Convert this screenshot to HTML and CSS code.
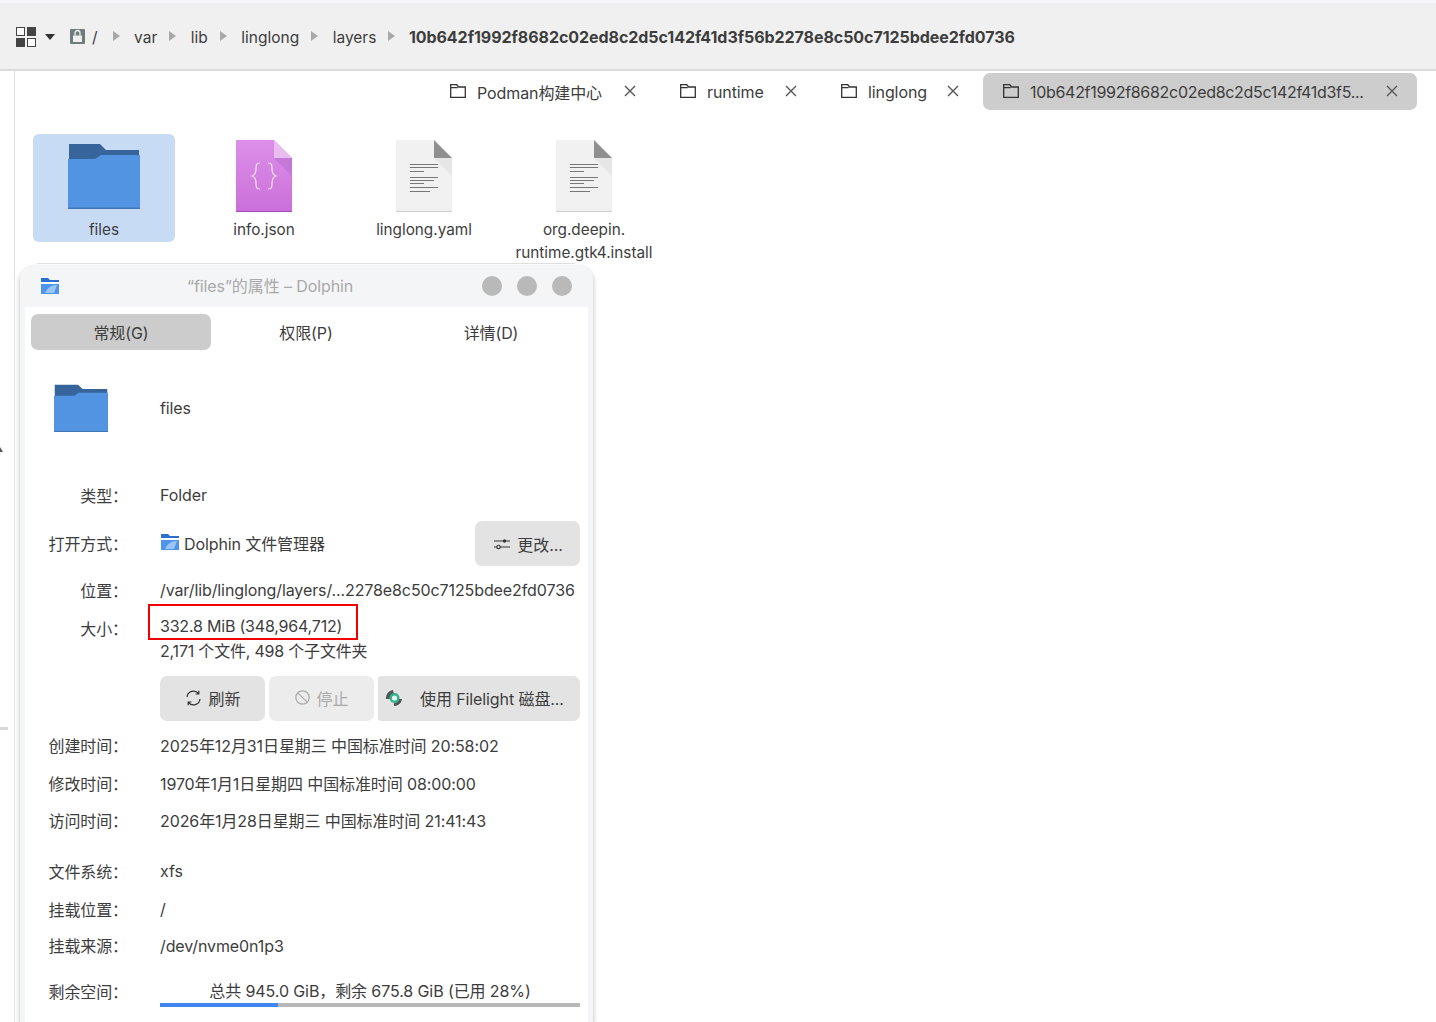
FILE: index.html
```html
<!DOCTYPE html>
<html lang="zh-CN">
<head>
<meta charset="utf-8">
<title>Dolphin</title>
<link rel="stylesheet" href="styles.css">
</head>
<body>
<svg class="defs" width="0" height="0" aria-hidden="true">
  <defs>
    <symbol id="folder" viewBox="0 0 72 66" preserveAspectRatio="none">
      <path d="M1 1h31l6 6h33v16H1z" fill="#37649b"/>
      <path d="M0 16h27l6-4h39v54H0z" fill="#5294e2"/>
      <path d="M0 64.500h72V66H0z" fill="#3f76b8"/>
    </symbol>
    <symbol id="tabfolder" viewBox="0 0 16 14">
      <path d="M.7.7h6l2 2.300h6.600v10.300H.7zM.7 3.600h7" fill="none" stroke="#333" stroke-width="1.300"/>
    </symbol>
    <symbol id="close" viewBox="0 0 12 12">
      <path d="M1 1l10 10M11 1L1 11" fill="none" stroke="#555" stroke-width="1.400"/>
    </symbol>
    <symbol id="arrow" viewBox="0 0 7 10">
      <path d="M0 0l7 5-7 5z" fill="#a9a9a9"/>
    </symbol>
    <symbol id="dolphin" viewBox="0 0 20 16">
      <path d="M1 0h7l2 2h9v13H1z" fill="#2c6fd0"/>
      <path d="M1 4h18v2H1z" fill="#fff"/>
      <path d="M1 6h18v10H1z" fill="#4c95ea"/>
      <path d="M5 15c2-5 6-8 12-8l-3 8z" fill="#9cc4f4"/>
    </symbol>
    <symbol id="doc" viewBox="0 0 56 72">
      <path d="M0 0h38l18 18v54H0z" fill="#f1f1f1"/>
      <path d="M38 18l18 18V18z" fill="#e6e6e6"/>
      <path d="M38 0l18 18H38z" fill="#8f8f8f"/>
      <path d="M0 71h56v1H0z" fill="#cfcfcf"/>
      <path d="M14 24h28v1H14zM14 27h28v1H14zM14 31h14v1H14zM14 37h28v1H14zM14 40h24v1H14zM14 43h14v1H14zM14 47h28v1H14zM14 51h20v1H14z" fill="#777"/>
    </symbol>
  </defs>
</svg>

<header class="toolbar">
  <svg class="grid-icon" width="21" height="21" viewBox="0 0 21 21">
    <rect x=".5" y=".5" width="8" height="8" fill="#fff" stroke="#444"/>
    <rect x="11" y="0" width="9" height="9" fill="#444"/>
    <rect x="0" y="11" width="9" height="9" fill="#444"/>
    <rect x="11.500" y="11.500" width="8" height="8" fill="#fff" stroke="#444"/>
  </svg>
  <svg class="caret" width="10" height="6" viewBox="0 0 10 6"><path d="M0 0h10L5 6z" fill="#333"/></svg>
  <svg class="drive" width="15" height="15" viewBox="0 0 15 15">
    <rect width="15" height="15" rx="1" fill="#6e7d7b"/>
    <path d="M3 6.500h9V13H3z" fill="#f0f0f0"/>
    <path d="M5 6.500V4a2.500 2.500 0 015 0v2.500" fill="none" stroke="#f0f0f0" stroke-width="1.300"/>
  </svg>
  <span class="crumb root">/</span>
  <svg class="sep"><use href="#arrow"/></svg>
  <span class="crumb">var</span>
  <svg class="sep"><use href="#arrow"/></svg>
  <span class="crumb">lib</span>
  <svg class="sep"><use href="#arrow"/></svg>
  <span class="crumb">linglong</span>
  <svg class="sep"><use href="#arrow"/></svg>
  <span class="crumb">layers</span>
  <svg class="sep"><use href="#arrow"/></svg>
  <span class="crumb current">10b642f1992f8682c02ed8c2d5c142f41d3f56b2278e8c50c7125bdee2fd0736</span>
</header>

<main class="view">
  <nav class="tabs">
    <div class="tab t1"><svg class="tab-icon"><use href="#tabfolder"/></svg><span>Podman构建中心</span><svg class="tab-x"><use href="#close"/></svg></div>
    <div class="tab t2"><svg class="tab-icon"><use href="#tabfolder"/></svg><span>runtime</span><svg class="tab-x"><use href="#close"/></svg></div>
    <div class="tab t3"><svg class="tab-icon"><use href="#tabfolder"/></svg><span>linglong</span><svg class="tab-x"><use href="#close"/></svg></div>
    <div class="tab active"><svg class="tab-icon"><use href="#tabfolder"/></svg><span class="tab-long">10b642f1992f8682c02ed8c2d5c142f41d3f5...</span><svg class="tab-x"><use href="#close"/></svg></div>
  </nav>

  <section class="files">
    <div class="file selected">
      <svg class="file-icon folder-big"><use href="#folder"/></svg>
      <span>files</span>
    </div>
    <div class="file">
      <svg class="file-icon" viewBox="0 0 56 72">
        <defs><linearGradient id="pink" x1="0" y1="0" x2="0" y2="1"><stop offset="0" stop-color="#dc8fe8"/><stop offset="1" stop-color="#cb6fda"/></linearGradient></defs>
        <path d="M0 0h38l18 18v54H0z" fill="url(#pink)"/>
        <path d="M38 18l18 18V18z" fill="#c479d6"/>
        <path d="M38 0l18 18H38z" fill="#e9bdf0"/>
        <path d="M0 71h56v1H0z" fill="#a24fb3"/>
        <path d="M24 23c-4 0-4 2-4 6 0 4-1 6-4 7 3 1 4 3 4 7s0 6 4 6M32 23c4 0 4 2 4 6 0 4 1 6 4 7-3 1-4 3-4 7s0 6-4 6" fill="none" stroke="#f6e4f9" stroke-width="1.200"/>
      </svg>
      <span>info.json</span>
    </div>
    <div class="file">
      <svg class="file-icon"><use href="#doc"/></svg>
      <span>linglong.yaml</span>
    </div>
    <div class="file">
      <svg class="file-icon"><use href="#doc"/></svg>
      <span>org.deepin.<br>runtime.gtk4.install</span>
    </div>
  </section>

  <aside class="edge-mark top"></aside>
  <aside class="edge-mark bottom"></aside>

  <section class="dialog">
    <header class="titlebar">
      <svg class="title-icon"><use href="#dolphin"/></svg>
      <span class="title">“files”的属性 – Dolphin</span>
      <div class="win-btns"><i></i><i></i><i></i></div>
    </header>
    <div class="dialog-body">
      <div class="dialog-tabs">
        <div class="dtab on">常规(G)</div>
        <div class="dtab">权限(P)</div>
        <div class="dtab">详情(D)</div>
      </div>

      <div class="rows">
        <div class="row r-icon">
          <div class="label"><svg class="dialog-folder"><use href="#folder"/></svg></div>
          <div class="value">files</div>
        </div>
        <div class="row r-type"><div class="label">类型：</div><div class="value">Folder</div></div>
        <div class="row r-open">
          <div class="label">打开方式：</div>
          <div class="value open-with">
            <span class="app"><svg class="app-icon"><use href="#dolphin"/></svg>Dolphin 文件管理器</span>
            <button class="btn change">
              <svg width="16" height="14" viewBox="0 0 16 14"><path d="M0 4h9M12 4h4M0 10h3M6 10h10" fill="none" stroke="#333" stroke-width="1.200"/><circle cx="10.500" cy="4" r="1.700" fill="#333"/><circle cx="4.500" cy="10" r="1.700" fill="none" stroke="#333" stroke-width="1.100"/></svg>
              更改...
            </button>
          </div>
        </div>
        <div class="row r-path"><div class="label">位置：</div><div class="value">/var/lib/linglong/layers/...2278e8c50c7125bdee2fd0736</div></div>
        <div class="row r-size">
          <div class="label size-label">大小：</div>
          <div class="value size-value">
            <div>332.8 MiB (348,964,712)</div>
            <div>2,171 个文件, 498 个子文件夹</div>
            <div class="highlight"></div>
          </div>
        </div>
        <div class="row r-actions">
          <div class="label"></div>
          <div class="actions">
            <button class="btn refresh">
              <svg width="17" height="16" viewBox="0 0 17 16"><path d="M2 7a6.500 6.500 0 0111.500-3.500M15 9A6.500 6.500 0 013.500 12.500M13.800 .8v3.200h-3.200M3.200 15.200V12h3.200" fill="none" stroke="#333" stroke-width="1.200"/></svg>
              刷新
            </button>
            <button class="btn stop" disabled>
              <svg width="15" height="15" viewBox="0 0 15 15"><circle cx="7.500" cy="7.500" r="6.700" fill="none" stroke="#aaa" stroke-width="1.200"/><path d="M2.800 2.800l9.400 9.400" stroke="#aaa" stroke-width="1.200"/></svg>
              停止
            </button>
            <button class="btn filelight">
              <svg width="18" height="18" viewBox="0 0 18 18"><path d="M1 10A8 8 0 018 1l1 4a4 4 0 00-4 5z" fill="#4f5856"/><path d="M17 10a8 8 0 01-8 7v-3a5 5 0 005-4z" fill="#4a5351"/><circle cx="9.500" cy="9" r="5" fill="#2fb38c"/><circle cx="9.500" cy="9" r="2.600" fill="#eef7f4"/></svg>
              <span class="filelight-text">使用 Filelight 磁盘...</span>
            </button>
          </div>
        </div>
        <div class="row r-time"><div class="label">创建时间：</div><div class="value">2025年12月31日星期三 中国标准时间 20:58:02</div></div>
        <div class="row r-time"><div class="label">修改时间：</div><div class="value">1970年1月1日星期四 中国标准时间 08:00:00</div></div>
        <div class="row r-time r-last"><div class="label">访问时间：</div><div class="value">2026年1月28日星期三 中国标准时间 21:41:43</div></div>
        <div class="row r-fs"><div class="label">文件系统：</div><div class="value">xfs</div></div>
        <div class="row r-time"><div class="label">挂载位置：</div><div class="value">/</div></div>
        <div class="row r-src"><div class="label">挂载来源：</div><div class="value">/dev/nvme0n1p3</div></div>
        <div class="row r-free">
          <div class="label">剩余空间：</div>
          <div class="value free">
            <div class="free-text">总共 945.0 GiB，剩余 675.8 GiB (已用 28%)</div>
            <div class="bar"><div class="bar-fill" style="width:28%"></div></div>
          </div>
        </div>
      </div>
    </div>
  </section>
</main>
</body>
</html>
```

FILE: styles.css
```css
* { box-sizing: border-box; }
html, body { margin: 0; height: 100%; }
body {
  width: 1436px;
  height: 1022px;
  overflow: hidden;
  background: #fff;
  color: #3d3d3d;
  font-family: "Inter", "Noto Sans CJK SC", sans-serif;
  font-size: 16px;
  letter-spacing: -0.1px;
  display: flex;
  flex-direction: column;
}
.defs { position: absolute; }

/* toolbar */
.toolbar {
  flex: none;
  height: 71px;
  background: #f0f0f0;
  border-top: 3px solid #f6f7f9;
  border-bottom: 2px solid #dcdcdc;
  display: flex;
  align-items: center;
  padding: 2px 0 0 16px;
  font-size: 15.500px;
  letter-spacing: 0;
}
.grid-icon { margin-right: 8px; }
.caret { margin-right: 15px; }
.drive { margin-right: 7px; margin-top: -1px; }
.crumb.root { margin-right: 15px; }
.sep { width: 7px; height: 10px; flex: none; margin-right: 14.500px; margin-top: -2px; }
.crumb { margin-right: 12px; }
.crumb.current { font-size: 16px; font-weight: 700; letter-spacing: -0.05px; margin-right: 0; margin-left: -1px; }

/* main */
.view { flex: 1; position: relative; }
.view::before {
  content: "";
  position: absolute;
  left: 14px;
  top: 0;
  bottom: 0;
  width: 1px;
  background: #e2e2e2;
}

.tabs {
  display: flex;
  justify-content: flex-end;
  align-items: center;
  gap: 43px;
  height: 37px;
  margin-top: 2px;
  padding-right: 19px;
}
.tab { display: flex; align-items: center; height: 37px; border-radius: 7px; }
.tab span { flex: 1; white-space: nowrap; margin-top: 1px; }
.tab-icon { width: 16px; height: 14px; flex: none; margin-right: 11px; margin-top: -2px; }
.t2 .tab-icon, .t3 .tab-icon { margin-left: 1px; }
.tab-x { width: 12px; height: 12px; flex: none; margin-top: -1px; }
.t1 { width: 186px; }
.t2 { width: 118px; }
.t3 { width: 119px; margin-right: -19px; }
.tab.active { background: #cdcdcd; width: 434px; padding: 0 19px 0 20px; }
.tab-long { letter-spacing: -0.3px; }

/* files */
.files {
  display: flex;
  gap: 18px;
  margin-top: 24px;
  padding-left: 33px;
}
.file {
  width: 142px;
  height: 108px;
  border-radius: 6px;
  display: flex;
  flex-direction: column;
  align-items: center;
  padding-top: 6px;
  text-align: center;
  font-size: 15.300px;
  letter-spacing: 0;
  line-height: 23px;
  white-space: nowrap;
}
.file.selected { background: #c8dbf4; }
.file-icon { width: 56px; height: 72px; flex: none; margin-bottom: 6px; }
.folder-big { width: 72px; height: 66px; margin-top: 3px; margin-bottom: 9px; }

.edge-mark { position: absolute; left: 0; }
.edge-mark.top { top: 376px; width: 3px; height: 5px; background: #555; clip-path: polygon(0 0, 100% 100%, 0 100%); }
.edge-mark.bottom { top: 656px; width: 8px; height: 3px; background: #d8d8d8; }

/* dialog */
.dialog {
  position: absolute;
  left: 20px;
  top: 194px;
  width: 573px;
  height: 757px;
  background: #f4f5f7;
  border-radius: 14px 14px 0 0;
  box-shadow: 0 3px 5px rgba(0, 0, 0, .28);
  padding: 0 5px;
  display: flex;
  flex-direction: column;
}
.dialog::before {
  content: "";
  position: absolute;
  left: 17px;
  right: 18px;
  top: -2px;
  height: 1px;
  background: #dfdfdf;
}
.titlebar {
  flex: none;
  height: 42px;
  padding: 0 16px 0 15px;
  display: flex;
  align-items: center;
}
.title-icon { width: 20px; height: 16px; flex: none; }
.title { margin: -3px 0 0 127px; color: #a9a9a9; }
.win-btns { margin-left: auto; margin-right: 0; display: flex; gap: 15px; }
.win-btns i { width: 20px; height: 20px; border-radius: 50%; background: #b9b9b9; }

.dialog-body { flex: 1; background: #fff; }
.dialog-tabs { display: flex; gap: 5px; padding: 7px 0 0 6px; }
.dtab {
  width: 180px;
  height: 36px;
  border-radius: 7px;
  display: flex;
  align-items: center;
  justify-content: center;
}
.dtab.on { background: #cccccc; }

.rows { padding: 10px 8px 0 0; }
.row { display: grid; grid-template-columns: 103px 1fr; column-gap: 32px; align-items: center; }
.label { text-align: right; white-space: nowrap; }
.value { white-space: nowrap; }
.r-icon { height: 96px; }
.r-icon .label { text-align: left; padding-left: 29px; height: 48px; }
.dialog-folder { width: 54px; height: 48px; display: block; }
.r-type { height: 44px; margin-top: 17px; }
.r-open { height: 45px; margin-top: 4px; }
.r-open .label { padding-bottom: 2px; }
.open-with { display: flex; align-items: center; justify-content: space-between; }
.app { display: flex; align-items: center; padding-bottom: 2px; }
.app-icon { width: 20px; height: 16px; margin-right: 4px; flex: none; margin-top: -1px; }
.r-path { height: 40px; margin-top: 4px; }
.r-size { height: 53px; margin-top: 1px; align-items: start; }
.size-label { padding-top: 5px; }
.size-value { position: relative; padding-top: 3px; line-height: 25px; letter-spacing: -0.2px; }
.highlight {
  position: absolute;
  left: -12px;
  top: -7px;
  width: 210px;
  height: 36px;
  border: 2px solid #f00000;
  pointer-events: none;
}
.r-actions { height: 45px; margin-top: 12px; }
.actions { display: flex; gap: 4px; }
.actions .btn { padding-bottom: 2px; }
.btn {
  height: 45px;
  border: 0;
  border-radius: 7px;
  background: #e3e3e3;
  color: #3d3d3d;
  font: inherit;
  letter-spacing: inherit;
  display: flex;
  align-items: center;
  justify-content: center;
  gap: 7px;
  padding: 0;
}
.change { width: 105px; padding-left: 2px; }
.refresh { width: 105px; }
.stop { width: 105px; background: #ececec; color: #aaa; }
.actions .filelight { width: 202px; justify-content: flex-start; padding-left: 7px; gap: 17px; border-radius: 3px 7px 7px 3px; }
.r-time { height: 38px; }
.r-actions + .r-time { margin-top: 5px; }
.r-time.r-last { height: 36px; }
.r-fs { height: 38px; margin-top: 14px; }
.r-src { height: 34px; }
.r-src .value { padding-top: 2px; }
.r-free { height: 40px; margin-top: 9px; }
.free { align-self: start; }
.free-text { text-align: center; line-height: 20px; padding-top: 10px; }
.bar { height: 4px; background: #b8b8b8; margin-top: 2px; }
.bar-fill { height: 4px; background: #3f86f0; }
```
